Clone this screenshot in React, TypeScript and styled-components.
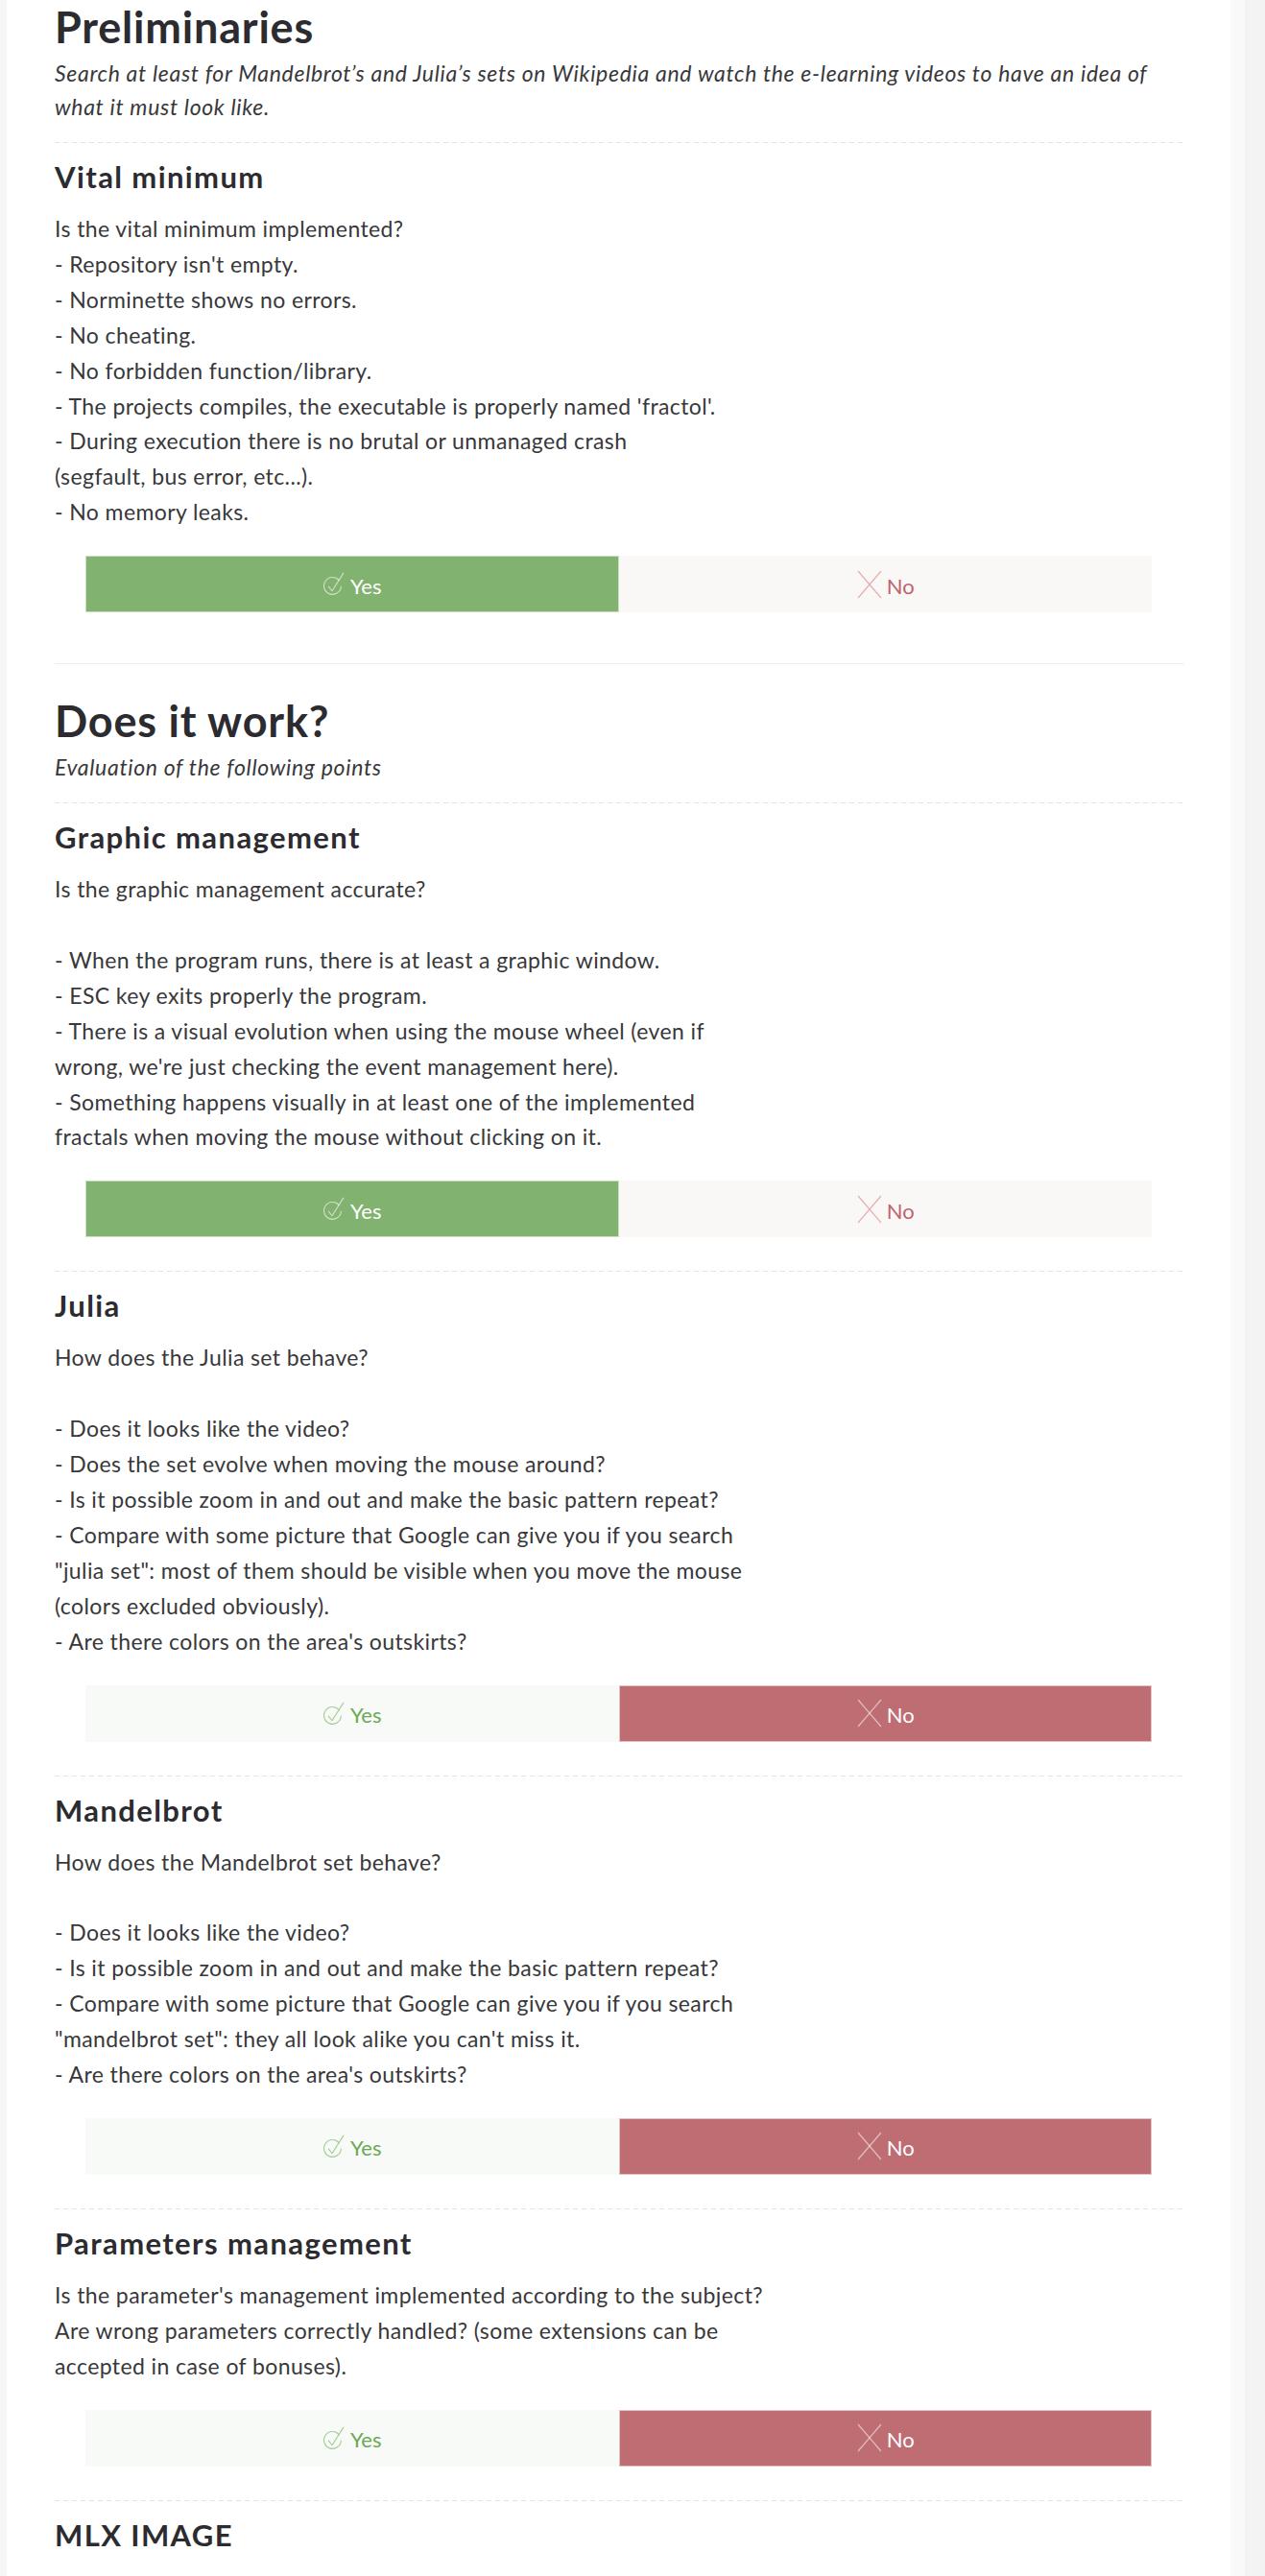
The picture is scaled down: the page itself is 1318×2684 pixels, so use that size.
import React from "react";
import styled, { createGlobalStyle } from "styled-components";

const GlobalStyle = createGlobalStyle`
  html, body {
    margin: 0;
    padding: 0;
    background: #ffffff;
  }
  body {
    font-family: Lato, "Open Sans", "Liberation Sans", sans-serif;
    color: #38383b;
    -webkit-font-smoothing: antialiased;
  }
`;

const Page = styled.div`
  display: flex;
  min-height: 2684px;
  background: #ffffff;
`;

const LeftStrip = styled.div`
  width: 7px;
  flex: none;
  background: #f6f6f6;
`;

const Main = styled.main`
  flex: 1;
  min-width: 0;
  padding: 0 48px 0 50px;
  background: #ffffff;
`;

const RightRail = styled.div`
  width: 36px;
  flex: none;
  display: flex;
`;

const RailPart = styled.div<{ $tone: string; $w: number }>`
  width: ${(p) => p.$w}px;
  background: ${(p) => p.$tone};
`;

const Section = styled.section<{ $first?: boolean }>`
  padding-top: ${(p) => (p.$first ? 3 : 34)}px;
  padding-bottom: 18px;
  border-top: ${(p) => (p.$first ? "none" : "1px solid #eeeeee")};
`;

const SectionTitle = styled.h2`
  margin: 0;
  font-size: 45px;
  line-height: 50px;
  font-weight: 700;
  color: #2b2b30;
  letter-spacing: 0.8px;
`;

const SectionSubtitle = styled.p`
  margin: 6px 0 0;
  font-size: 23px;
  line-height: 35px;
  font-style: italic;
  letter-spacing: 0.68px;
  color: #38383b;
  padding-bottom: 19px;
`;

const Question = styled.div`
  padding: 18px 0 35px;
  background-image: repeating-linear-gradient(
    to right,
    #e4e4e4 0,
    #e4e4e4 5px,
    transparent 5px,
    transparent 9px
  );
  background-size: 100% 1px;
  background-repeat: no-repeat;
  background-position: top left;
`;

const QuestionTitle = styled.h3`
  margin: 0;
  font-size: 31px;
  line-height: 36px;
  font-weight: 700;
  color: #2b2b30;
  letter-spacing: 1.4px;
`;

const Body = styled.div`
  margin-top: 18px;
  font-size: 23px;
  line-height: 36.9px;
  letter-spacing: 0.4px;
  color: #38383b;
`;

const Line = styled.div`
  min-height: 36.9px;
  white-space: nowrap;
`;

const ButtonRow = styled.div`
  display: flex;
  margin: 27px 34px 0 32px;
  height: 59px;
`;

const palette = {
  yes: {
    activeBg: "#82b26f",
    activeEdge: "#c9dfbf",
    idleBg: "#f7faf6",
    idleText: "#6aa955",
    idleIcon: "#a3cd94",
  },
  no: {
    activeBg: "#be6e73",
    activeEdge: "#e2c2c4",
    idleBg: "#f9f8f7",
    idleText: "#c0636b",
    idleIcon: "#e4adb1",
  },
};

const Choice = styled.div<{ $kind: "yes" | "no"; $active: boolean }>`
  flex: 1;
  display: flex;
  align-items: center;
  justify-content: center;
  gap: 4px;
  background: ${(p) =>
    p.$active ? palette[p.$kind].activeBg : palette[p.$kind].idleBg};
  box-shadow: ${(p) =>
    p.$active ? `inset 0 0 0 1px ${palette[p.$kind].activeEdge}` : "none"};
  color: ${(p) => (p.$active ? "#ffffff" : palette[p.$kind].idleText)};
  font-size: 22px;
  line-height: 24px;
  font-weight: 400;
`;

const ChoiceLabel = styled.span`
  display: inline-block;
  padding-top: 4px;
`;

const CheckIcon = ({ color }: { color: string }) => (
  <svg width="25" height="29" viewBox="0 0 24 28" fill="none">
    <path
      d="M16.5 10.2 A8.6 8.6 0 1 0 18.6 16.4"
      stroke={color}
      strokeWidth="1.1"
      strokeLinecap="round"
    />
    <path
      d="M6 16.5 L9.6 21 L21 3"
      stroke={color}
      strokeWidth="1.1"
      strokeLinecap="round"
      strokeLinejoin="round"
    />
  </svg>
);

const XIcon = ({ color }: { color: string }) => (
  <svg width="28" height="30" viewBox="0 0 28 30" fill="none">
    <path d="M2 1 L26 29" stroke={color} strokeWidth="1.2" />
    <path d="M26 1 L2 29" stroke={color} strokeWidth="1.2" />
  </svg>
);

type Answer = "yes" | "no";

const Verdict = ({ answer }: { answer: Answer }) => (
  <ButtonRow>
    <Choice $kind="yes" $active={answer === "yes"}>
      <CheckIcon
        color={answer === "yes" ? "rgba(255,255,255,0.6)" : palette.yes.idleIcon}
      />
      <ChoiceLabel>Yes</ChoiceLabel>
    </Choice>
    <Choice $kind="no" $active={answer === "no"}>
      <XIcon
        color={answer === "no" ? "rgba(255,255,255,0.55)" : palette.no.idleIcon}
      />
      <ChoiceLabel>No</ChoiceLabel>
    </Choice>
  </ButtonRow>
);

type Q = { title: string; lines?: string[]; answer?: Answer };

const QuestionBlock = ({ q }: { q: Q }) => (
  <Question>
    <QuestionTitle>{q.title}</QuestionTitle>
    {q.lines && (
      <Body>
        {q.lines.map((l, i) => (
          <Line key={i}>{l}</Line>
        ))}
      </Body>
    )}
    {q.answer && <Verdict answer={q.answer} />}
  </Question>
);

const prelim: Q[] = [
  {
    title: "Vital minimum",
    lines: [
      "Is the vital minimum implemented?",
      "- Repository isn't empty.",
      "- Norminette shows no errors.",
      "- No cheating.",
      "- No forbidden function/library.",
      "- The projects compiles, the executable is properly named 'fractol'.",
      "- During execution there is no brutal or unmanaged crash",
      "(segfault, bus error, etc...).",
      "- No memory leaks.",
    ],
    answer: "yes",
  },
];

const works: Q[] = [
  {
    title: "Graphic management",
    lines: [
      "Is the graphic management accurate?",
      "",
      "- When the program runs, there is at least a graphic window.",
      "- ESC key exits properly the program.",
      "- There is a visual evolution when using the mouse wheel (even if",
      "wrong, we're just checking the event management here).",
      "- Something happens visually in at least one of the implemented",
      "fractals when moving the mouse without clicking on it.",
    ],
    answer: "yes",
  },
  {
    title: "Julia",
    lines: [
      "How does the Julia set behave?",
      "",
      "- Does it looks like the video?",
      "- Does the set evolve when moving the mouse around?",
      "- Is it possible zoom in and out and make the basic pattern repeat?",
      "- Compare with some picture that Google can give you if you search",
      "\"julia set\": most of them should be visible when you move the mouse",
      "(colors excluded obviously).",
      "- Are there colors on the area's outskirts?",
    ],
    answer: "no",
  },
  {
    title: "Mandelbrot",
    lines: [
      "How does the Mandelbrot set behave?",
      "",
      "- Does it looks like the video?",
      "- Is it possible zoom in and out and make the basic pattern repeat?",
      "- Compare with some picture that Google can give you if you search",
      "\"mandelbrot set\": they all look alike you can't miss it.",
      "- Are there colors on the area's outskirts?",
    ],
    answer: "no",
  },
  {
    title: "Parameters management",
    lines: [
      "Is the parameter's management implemented according to the subject?",
      "Are wrong parameters correctly handled? (some extensions can be",
      "accepted in case of bonuses).",
    ],
    answer: "no",
  },
  { title: "MLX IMAGE" },
];

export default function App() {
  return (
    <>
      <GlobalStyle />
      <Page>
        <LeftStrip />
        <Main>
          <Section $first>
            <SectionTitle>Preliminaries</SectionTitle>
            <SectionSubtitle>
              Search at least for Mandelbrot’s and Julia’s sets on Wikipedia and
              watch the e-learning videos to have an idea of
              <br />
              what it must look like.
            </SectionSubtitle>
            {prelim.map((q) => (
              <QuestionBlock key={q.title} q={q} />
            ))}
          </Section>
          <Section>
            <SectionTitle>Does it work?</SectionTitle>
            <SectionSubtitle>Evaluation of the following points</SectionSubtitle>
            {works.map((q) => (
              <QuestionBlock key={q.title} q={q} />
            ))}
          </Section>
        </Main>
        <RightRail>
          <RailPart $tone="#f9f9f9" $w={15} />
          <RailPart $tone="#f3f3f3" $w={21} />
        </RightRail>
      </Page>
    </>
  );
}
